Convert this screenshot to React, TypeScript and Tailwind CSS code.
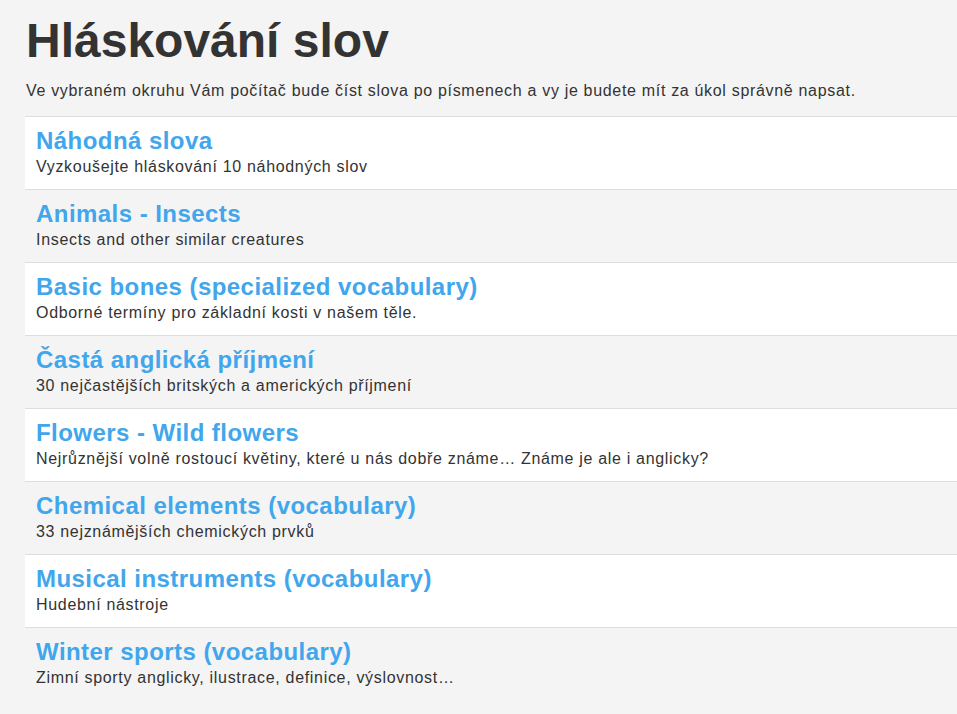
import React from "react";

const items = [
  ["Náhodná slova", "Vyzkoušejte hláskování 10 náhodných slov"],
  ["Animals - Insects", "Insects and other similar creatures"],
  ["Basic bones (specialized vocabulary)", "Odborné termíny pro základní kosti v našem těle."],
  ["Častá anglická příjmení", "30 nejčastějších britských a amerických příjmení"],
  ["Flowers - Wild flowers", "Nejrůznější volně rostoucí květiny, které u nás dobře známe… Známe je ale i anglicky?"],
  ["Chemical elements (vocabulary)", "33 nejznámějších chemických prvků"],
  ["Musical instruments (vocabulary)", "Hudební nástroje"],
  ["Winter sports (vocabulary)", "Zimní sporty anglicky, ilustrace, definice, výslovnost…"],
];

export default function App() {
  return (
    <div
      className="min-h-[714px] bg-[#f4f4f4] text-[#333] pl-[25px] overflow-hidden"
      style={{ fontFamily: '"Liberation Sans", Arial, sans-serif' }}
    >
      <h1 className="pt-[14px] text-[48px] leading-[53px] font-bold text-[#333] pl-[1px]">
        Hláskování slov
      </h1>
      <p className="mt-[12px] text-[16px] leading-[24px] tracking-[0.68px] pl-[1px] whitespace-nowrap">
        Ve vybraném okruhu Vám počítač bude číst slova po písmenech a vy je budete mít za úkol správně napsat.
      </p>
      <div className="mt-[13px] flex flex-col">
        {items.map(([t, d], i) => (
          <div
            key={t}
            className={`border-t border-[#dddddd] pl-[11px] pt-[10px] pb-[10px] ${
              i % 2 === 0 ? "bg-white" : "bg-transparent"
            }`}
          >
            <div className="text-[24px] leading-[28px] font-bold tracking-[0.45px] text-[#41a6ec] whitespace-nowrap">
              {t}
            </div>
            <div className="text-[16px] leading-[24px] tracking-[0.68px] text-[#333] whitespace-nowrap">
              {d}
            </div>
          </div>
        ))}
      </div>
    </div>
  );
}
